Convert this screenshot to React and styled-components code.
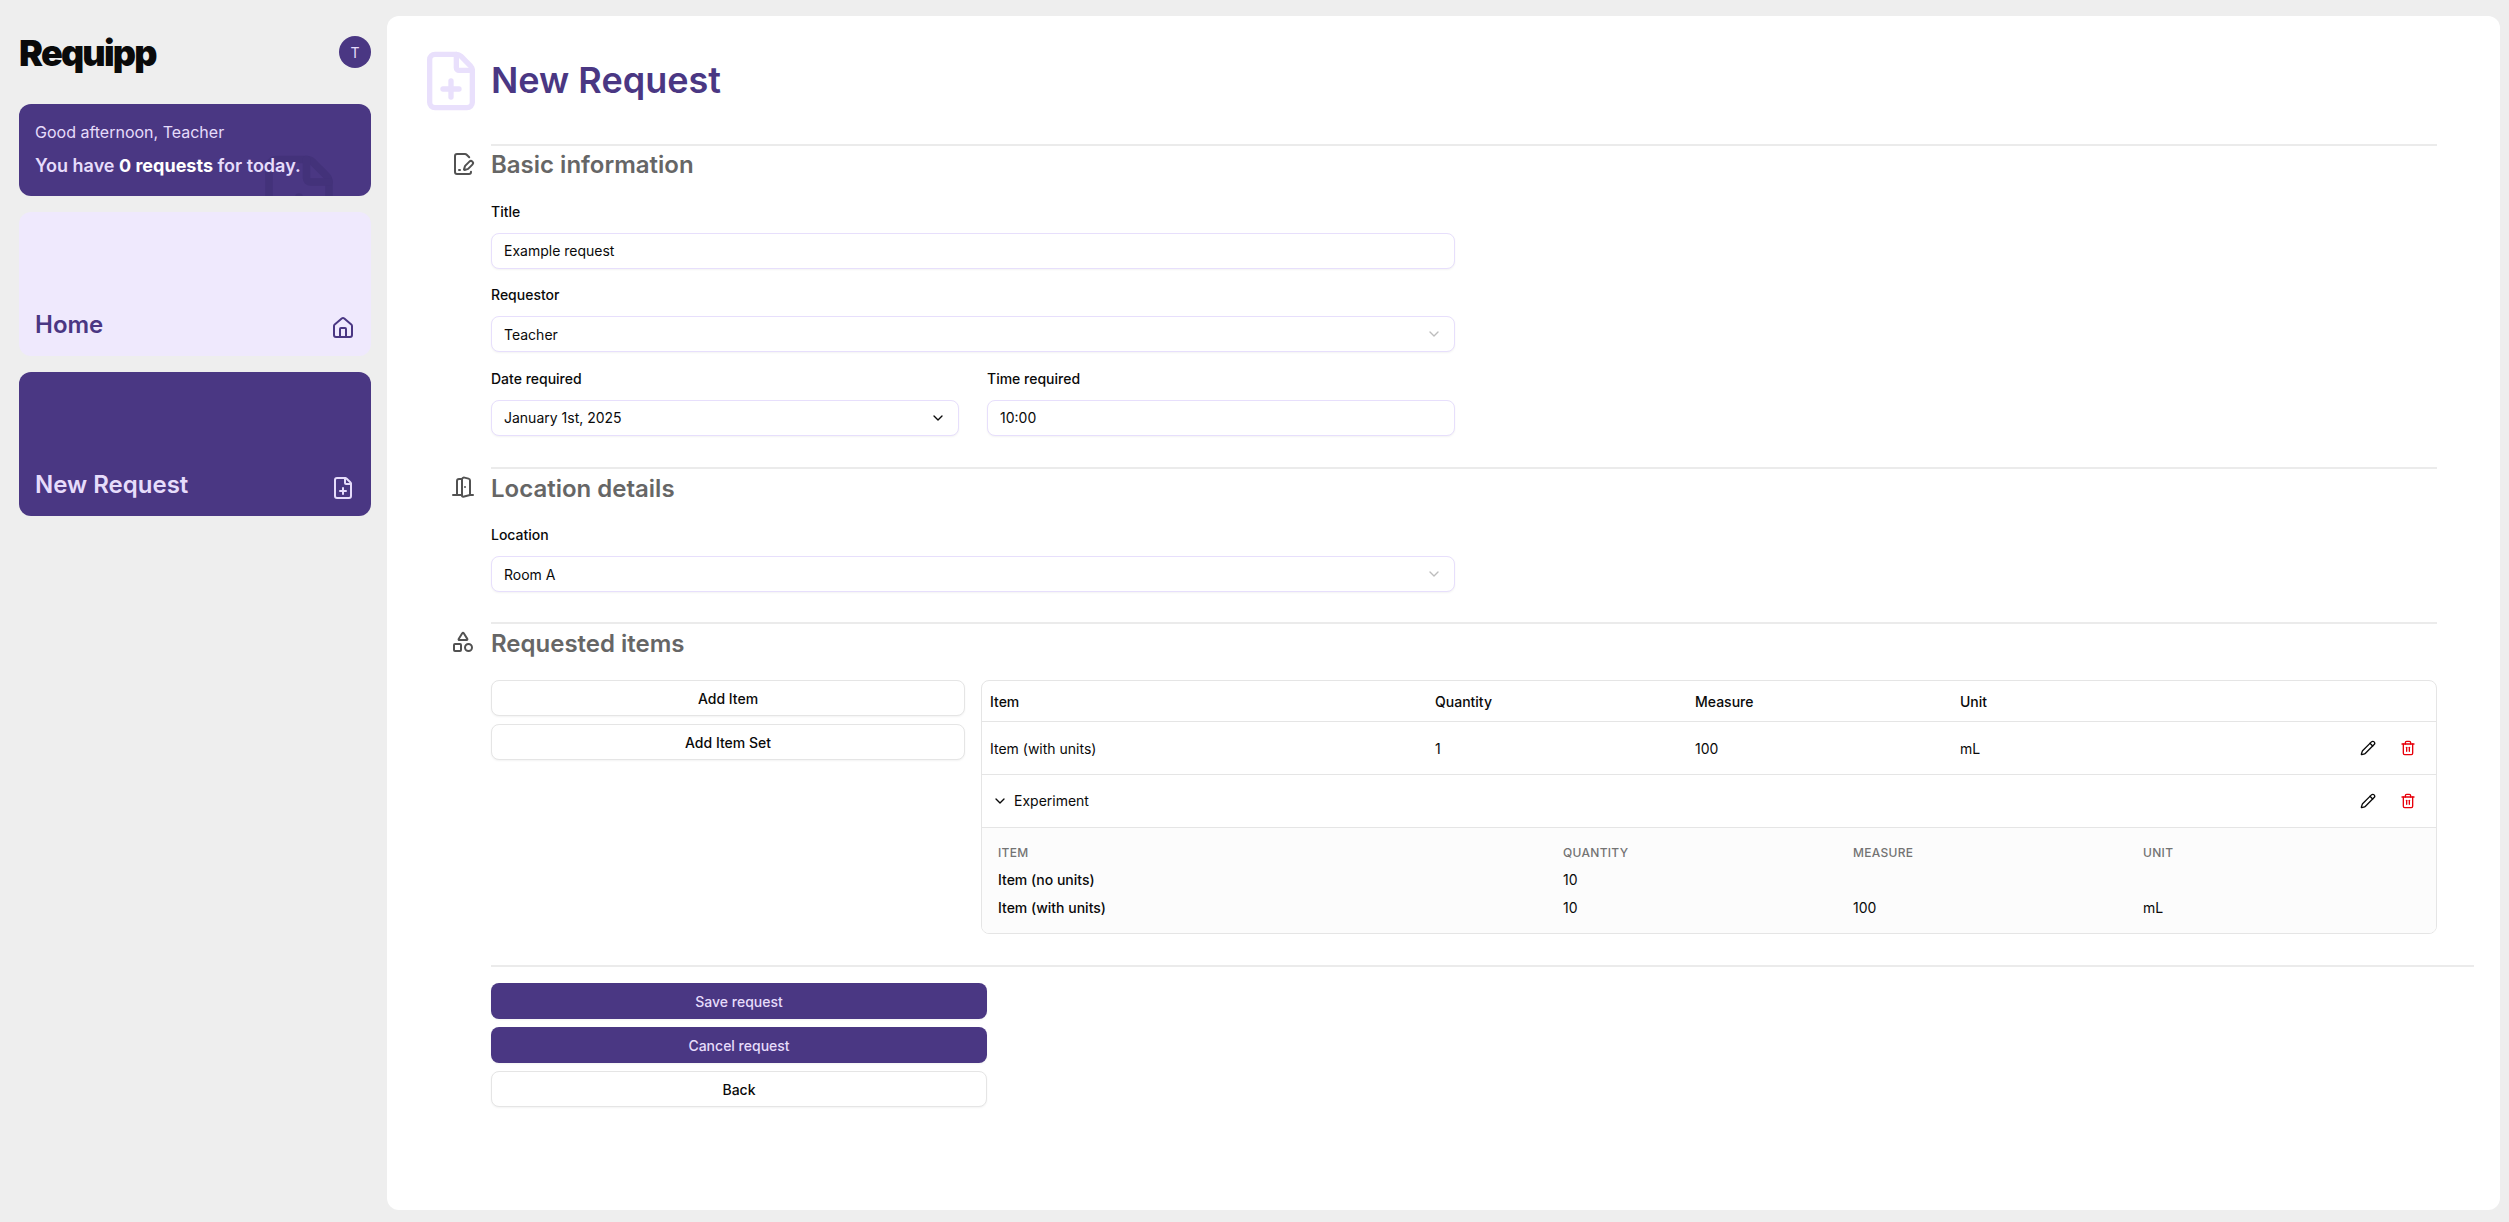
import React from 'react';
import styled, { createGlobalStyle } from 'styled-components';
import { ChevronDown, DoorOpen, FilePenLine, FilePlus, House, Pencil, Shapes, Trash2 } from 'lucide-react';

const purple = '#4a3783';
const lilac = '#efe9fd';
const lilacText = '#e6dcfb';
const lilacBorder = '#e7dffc';
const line = '#e5e5e5';

const GlobalStyle = createGlobalStyle`
  html, body { margin: 0; padding: 0; height: 100%; }
  body {
    background: #eeeeee;
    color: #0a0a0a;
    font-family: Inter, "Noto Sans", sans-serif;
    font-size: 14px;
  }
  * { box-sizing: border-box; }
`;

const Page = styled.div`
  display: flex;
  gap: 16px;
  height: 1222px;
  padding: 16px 9px 12px 19px;
  overflow: hidden;
`;

const Sidebar = styled.aside`
  width: 352px;
  flex-shrink: 0;
  display: flex;
  flex-direction: column;
`;

const SideHeader = styled.div`
  height: 88px;
  display: flex;
  justify-content: space-between;
  padding-top: 20px;
`;

const Logo = styled.div`
  font-size: 36px;
  line-height: 40px;
  font-weight: 900;
  letter-spacing: -1.8px;
  color: #0a0a0a;
  margin-top: -3px;
`;

const Avatar = styled.div`
  width: 32px;
  height: 32px;
  border-radius: 50%;
  background: ${purple};
  color: ${lilacText};
  font-size: 14px;
  display: flex;
  align-items: center;
  justify-content: center;
`;

const Greeting = styled.div`
  position: relative;
  height: 92px;
  border-radius: 12px;
  background: ${purple};
  color: ${lilacText};
  padding: 16px;
  overflow: hidden;
  margin-bottom: 16px;
`;

const GreetingLine = styled.div`
  position: relative;
  font-size: ${(p) => (p.$strong ? '18px' : '16px')};
  line-height: 24px;
  font-weight: ${(p) => (p.$strong ? 600 : 400)};
  margin-top: ${(p) => (p.$strong ? '10px' : '0')};
  b { color: #fff; font-weight: 700; }
`;

const Watermark = styled(FilePlus)`
  position: absolute;
  left: 235px;
  top: 48px;
  color: #43327a;
`;

const NavCard = styled.a`
  height: 144px;
  border-radius: 12px;
  margin-bottom: 16px;
  padding: 0 16px 16px;
  display: flex;
  align-items: flex-end;
  justify-content: space-between;
  background: ${(p) => (p.$active ? purple : lilac)};
  color: ${(p) => (p.$active ? lilacText : purple)};
`;

const NavLabel = styled.span`
  font-size: 24px;
  line-height: 32px;
  font-weight: 600;
  margin-bottom: -1px;
`;

const Main = styled.main`
  flex: 1;
  background: #fff;
  border-radius: 12px;
  padding: 29px 26px 0 28px;
  min-width: 0;
`;

const PageHeader = styled.header`
  display: flex;
  align-items: center;
  gap: 8px;
  height: 72px;
  margin-bottom: 27px;
`;

const PageIcon = styled(FilePlus)`
  color: #e9e0fc;
  flex-shrink: 0;
  margin-left: 4px;
`;

const PageTitle = styled.h1`
  margin: 0 0 2px;
  font-size: 36px;
  line-height: 40px;
  font-weight: 600;
  color: ${purple};
`;

const Section = styled.section`
  display: grid;
  grid-template-columns: 24px 1fr;
  column-gap: 16px;
  margin-left: 36px;
  margin-right: 37px;
`;

const SectionIcon = styled.div`
  color: #525252;
  padding-top: 8px;
  height: 24px;
`;

const SectionBody = styled.div`
  border-top: 2px solid #ebebeb;
  padding-bottom: ${(p) => p.$pad || 0}px;
`;

const SectionTitle = styled.h2`
  margin: ${(p) => p.$top || 3}px 0 4px;
  font-size: 24px;
  line-height: 32px;
  font-weight: 600;
  color: #666666;
`;

const Form = styled.div`
  width: 964px;
  display: flex;
  flex-direction: column;
`;

const Field = styled.div`
  flex: 1;
  min-width: 0;
`;

const Label = styled.div`
  font-size: 14px;
  line-height: 20px;
  font-weight: 500;
  margin: 16.5px 0 11px;
`;

const Control = styled.div`
  height: 36px;
  border: 1px solid ${lilacBorder};
  border-radius: 8px;
  background: #fff;
  box-shadow: 0 1px 2px rgba(0, 0, 0, 0.05);
  padding: 0 12px;
  display: flex;
  align-items: center;
  justify-content: space-between;
  font-size: 14px;
  svg { color: ${(p) => (p.$dark ? '#0a0a0a' : '#bdbdbd')}; }
`;

const FieldRow = styled.div`
  display: flex;
  gap: 28px;
`;

const ItemsLayout = styled.div`
  display: flex;
  gap: 16px;
  margin-top: 20px;
`;

const ButtonColumn = styled.div`
  width: ${(p) => p.$width}px;
  flex-shrink: 0;
  display: flex;
  flex-direction: column;
  gap: 8px;
`;

const Button = styled.button`
  height: 36px;
  border-radius: 8px;
  border: ${(p) => (p.$primary ? 'none' : `1px solid ${line}`)};
  background: ${(p) => (p.$primary ? purple : '#fff')};
  color: ${(p) => (p.$primary ? lilacText : '#0a0a0a')};
  box-shadow: 0 1px 2px rgba(0, 0, 0, 0.05);
  font-family: inherit;
  font-size: 14px;
  font-weight: 500;
  padding: 0;
`;

const Table = styled.div`
  flex: 1;
  border: 1px solid ${line};
  border-radius: 8px;
  overflow: hidden;
`;

const Row = styled.div`
  display: grid;
  grid-template-columns: 445px 260px 265px 1fr 76px;
  align-items: center;
  height: ${(p) => p.$height}px;
  padding-left: 8px;
  border-bottom: 1px solid ${line};
  font-weight: ${(p) => (p.$head ? 500 : 400)};
`;

const GroupName = styled.div`
  grid-column: 1 / 5;
  display: flex;
  align-items: center;
  gap: 6px;
  padding-left: 2px;
  padding-bottom: 1px;
`;

const Actions = styled.div`
  display: flex;
  gap: 24px;
  svg:last-child { color: #e7000b; }
`;

const SubTable = styled.div`
  background: #fcfcfc;
  padding: 11px 16px 12px;
`;

const SubRow = styled.div`
  display: grid;
  grid-template-columns: 565px 290px 290px 1fr;
  align-items: center;
  height: ${(p) => (p.$head ? '26px' : '28px')};
  font-size: ${(p) => (p.$head ? '12px' : '14px')};
  color: ${(p) => (p.$head ? '#737373' : '#0a0a0a')};
  font-weight: ${(p) => (p.$head ? 500 : 400)};
  text-transform: ${(p) => (p.$head ? 'uppercase' : 'none')};
  letter-spacing: ${(p) => (p.$head ? '0.3px' : '0')};
  span:first-child { font-weight: 500; }
`;

const Footer = styled.div`
  margin-left: 76px;
  margin-top: 31px;
  padding-top: 16px;
  border-top: 2px solid #ebebeb;
`;

const App = () => (
  <>
    <GlobalStyle />
    <Page>
      <Sidebar>
        <SideHeader>
          <Logo>Requipp</Logo>
          <Avatar>T</Avatar>
        </SideHeader>
        <Greeting>
          <Watermark size={90} strokeWidth={2} />
          <GreetingLine>Good afternoon, Teacher</GreetingLine>
          <GreetingLine $strong>
            You have <b>0 requests</b> for today.
          </GreetingLine>
        </Greeting>
        <NavCard>
          <NavLabel>Home</NavLabel>
          <House size={24} />
        </NavCard>
        <NavCard $active>
          <NavLabel>New Request</NavLabel>
          <FilePlus size={24} />
        </NavCard>
      </Sidebar>
      <Main>
        <PageHeader>
          <PageIcon size={64} />
          <PageTitle>New Request</PageTitle>
        </PageHeader>

        <Section>
          <SectionIcon><FilePenLine size={24} /></SectionIcon>
          <SectionBody $pad={31}>
            <SectionTitle>Basic information</SectionTitle>
            <Form>
              <Field>
                <Label>Title</Label>
                <Control>Example request</Control>
              </Field>
              <Field>
                <Label>Requestor</Label>
                <Control>Teacher<ChevronDown size={16} /></Control>
              </Field>
              <FieldRow>
                <Field>
                  <Label>Date required</Label>
                  <Control $dark>January 1st, 2025<ChevronDown size={16} /></Control>
                </Field>
                <Field>
                  <Label>Time required</Label>
                  <Control>10:00</Control>
                </Field>
              </FieldRow>
            </Form>
          </SectionBody>
        </Section>

        <Section>
          <SectionIcon><DoorOpen size={24} /></SectionIcon>
          <SectionBody $pad={30}>
            <SectionTitle $top={4}>Location details</SectionTitle>
            <Form>
              <Field>
                <Label>Location</Label>
                <Control>Room A<ChevronDown size={16} /></Control>
              </Field>
            </Form>
          </SectionBody>
        </Section>

        <Section>
          <SectionIcon><Shapes size={24} /></SectionIcon>
          <SectionBody>
            <SectionTitle $top={4}>Requested items</SectionTitle>
            <ItemsLayout>
              <ButtonColumn $width={474}>
                <Button>Add Item</Button>
                <Button>Add Item Set</Button>
              </ButtonColumn>
              <Table>
                <Row $head $height={41}>
                  <span>Item</span>
                  <span>Quantity</span>
                  <span>Measure</span>
                  <span>Unit</span>
                </Row>
                <Row $height={53}>
                  <span>Item (with units)</span>
                  <span>1</span>
                  <span>100</span>
                  <span>mL</span>
                  <Actions><Pencil size={16} /><Trash2 size={16} /></Actions>
                </Row>
                <Row $height={53}>
                  <GroupName><ChevronDown size={16} />Experiment</GroupName>
                  <Actions><Pencil size={16} /><Trash2 size={16} /></Actions>
                </Row>
                <SubTable>
                  <SubRow $head>
                    <span>Item</span>
                    <span>Quantity</span>
                    <span>Measure</span>
                    <span>Unit</span>
                  </SubRow>
                  <SubRow>
                    <span>Item (no units)</span>
                    <span>10</span>
                  </SubRow>
                  <SubRow>
                    <span>Item (with units)</span>
                    <span>10</span>
                    <span>100</span>
                    <span>mL</span>
                  </SubRow>
                </SubTable>
              </Table>
            </ItemsLayout>
          </SectionBody>
        </Section>

        <Footer>
          <ButtonColumn $width={496}>
            <Button $primary>Save request</Button>
            <Button $primary>Cancel request</Button>
            <Button>Back</Button>
          </ButtonColumn>
        </Footer>
      </Main>
    </Page>
  </>
);

export default App;
